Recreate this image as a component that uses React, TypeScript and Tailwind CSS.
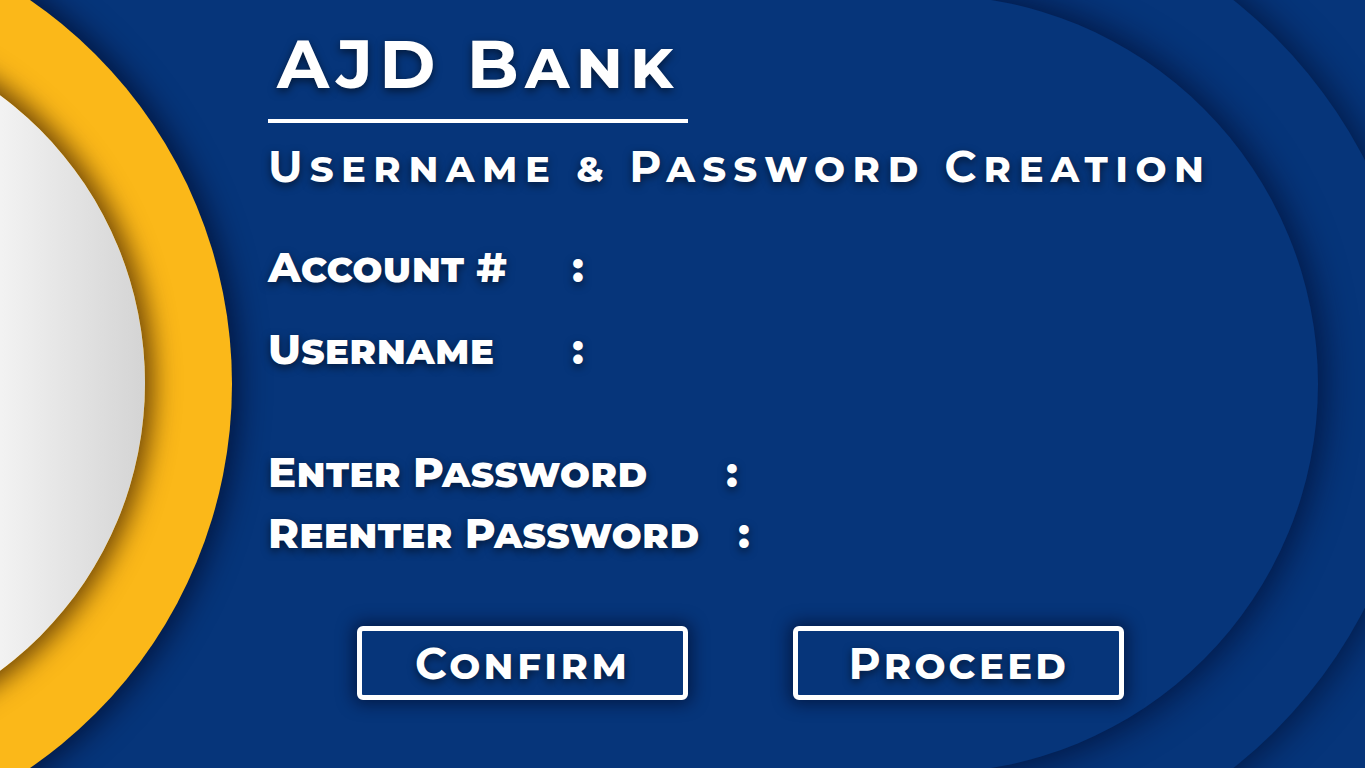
const font = "font-['Montserrat','DejaVu_Sans','Liberation_Sans',sans-serif]";
const sc = "[font-variant-caps:small-caps]";
const glow = "[text-shadow:0_3px_8px_rgba(0,0,0,0.55)]";

function Row({ label, width, className = "" }: { label: string; width: string; className?: string }) {
  return (
    <div className={`flex items-baseline ${className}`}>
      <span className={`${width} shrink-0`}>{label}</span>
      <span>:</span>
    </div>
  );
}

export default function App() {
  return (
    <div className={`relative h-[768px] w-[1365px] overflow-hidden bg-[#06357a] text-white ${font}`}>
      {/* background art */}
      <div className="absolute left-[-600px] top-[-106px] h-[980px] w-[2019px] rounded-r-[490px] bg-[#06357a] shadow-[0_0_34px_6px_rgba(0,12,45,0.65)]" />
      <div className="absolute left-[-600px] top-[-5px] h-[778px] w-[1918px] rounded-r-[389px] bg-[#06357a] shadow-[0_0_34px_6px_rgba(0,12,45,0.7)]" />
      <div className="absolute left-[-700px] top-[-82px] h-[932px] w-[932px] rounded-full bg-[#fbb819] shadow-[0_0_30px_6px_rgba(0,10,40,0.75)]" />
      <div className="absolute left-[-571px] top-[25px] h-[716px] w-[716px] rounded-full bg-[linear-gradient(to_right,#f4f4f4_0%,#f2f2f2_80%,#d4d4d4_100%)] shadow-[0_0_26px_8px_rgba(60,30,0,0.75)]" />

      {/* content */}
      <div className="relative flex flex-col pl-[268px] pt-[24px]">
        <div className="w-[420px]">
          <h1 className={`pl-[9px] text-[68px] font-bold leading-[80px] tracking-[0.09em] ${sc} ${glow}`}>AJD Bank</h1>
          <div className="mt-[15px] h-[4px] w-[420px] bg-white" />
        </div>
        <h2 className={`mt-[15px] whitespace-nowrap text-[44px] font-bold leading-[56px] tracking-[0.155em] ${sc} ${glow}`}>
          Username &amp; Password Creation
        </h2>

        <div className={`mt-[47px] flex flex-col text-[42px] font-extrabold leading-[52px] ${sc} ${glow}`}>
          <Row label="Account #" width="w-[304px]" />
          <Row label="Username" width="w-[304px]" className="mt-[30px]" />
          <Row label="Enter Password" width="w-[458px]" className="mt-[71px]" />
          <Row label="Reenter Password" width="w-[470px]" className="mt-[9px]" />
        </div>

        <div className="ml-[89px] mt-[67px] flex gap-[105px]">
          {["Confirm", "Proceed"].map((t) => (
            <button
              key={t}
              className={`flex h-[74px] w-[331px] items-center justify-center rounded-[6px] border-[5px] border-white bg-[#06357a] text-[44px] font-bold tracking-[0.06em] shadow-[0_0_16px_4px_rgba(0,10,40,0.6)] ${sc} ${glow}`}
            >
              {t}
            </button>
          ))}
        </div>
      </div>
    </div>
  );
}
